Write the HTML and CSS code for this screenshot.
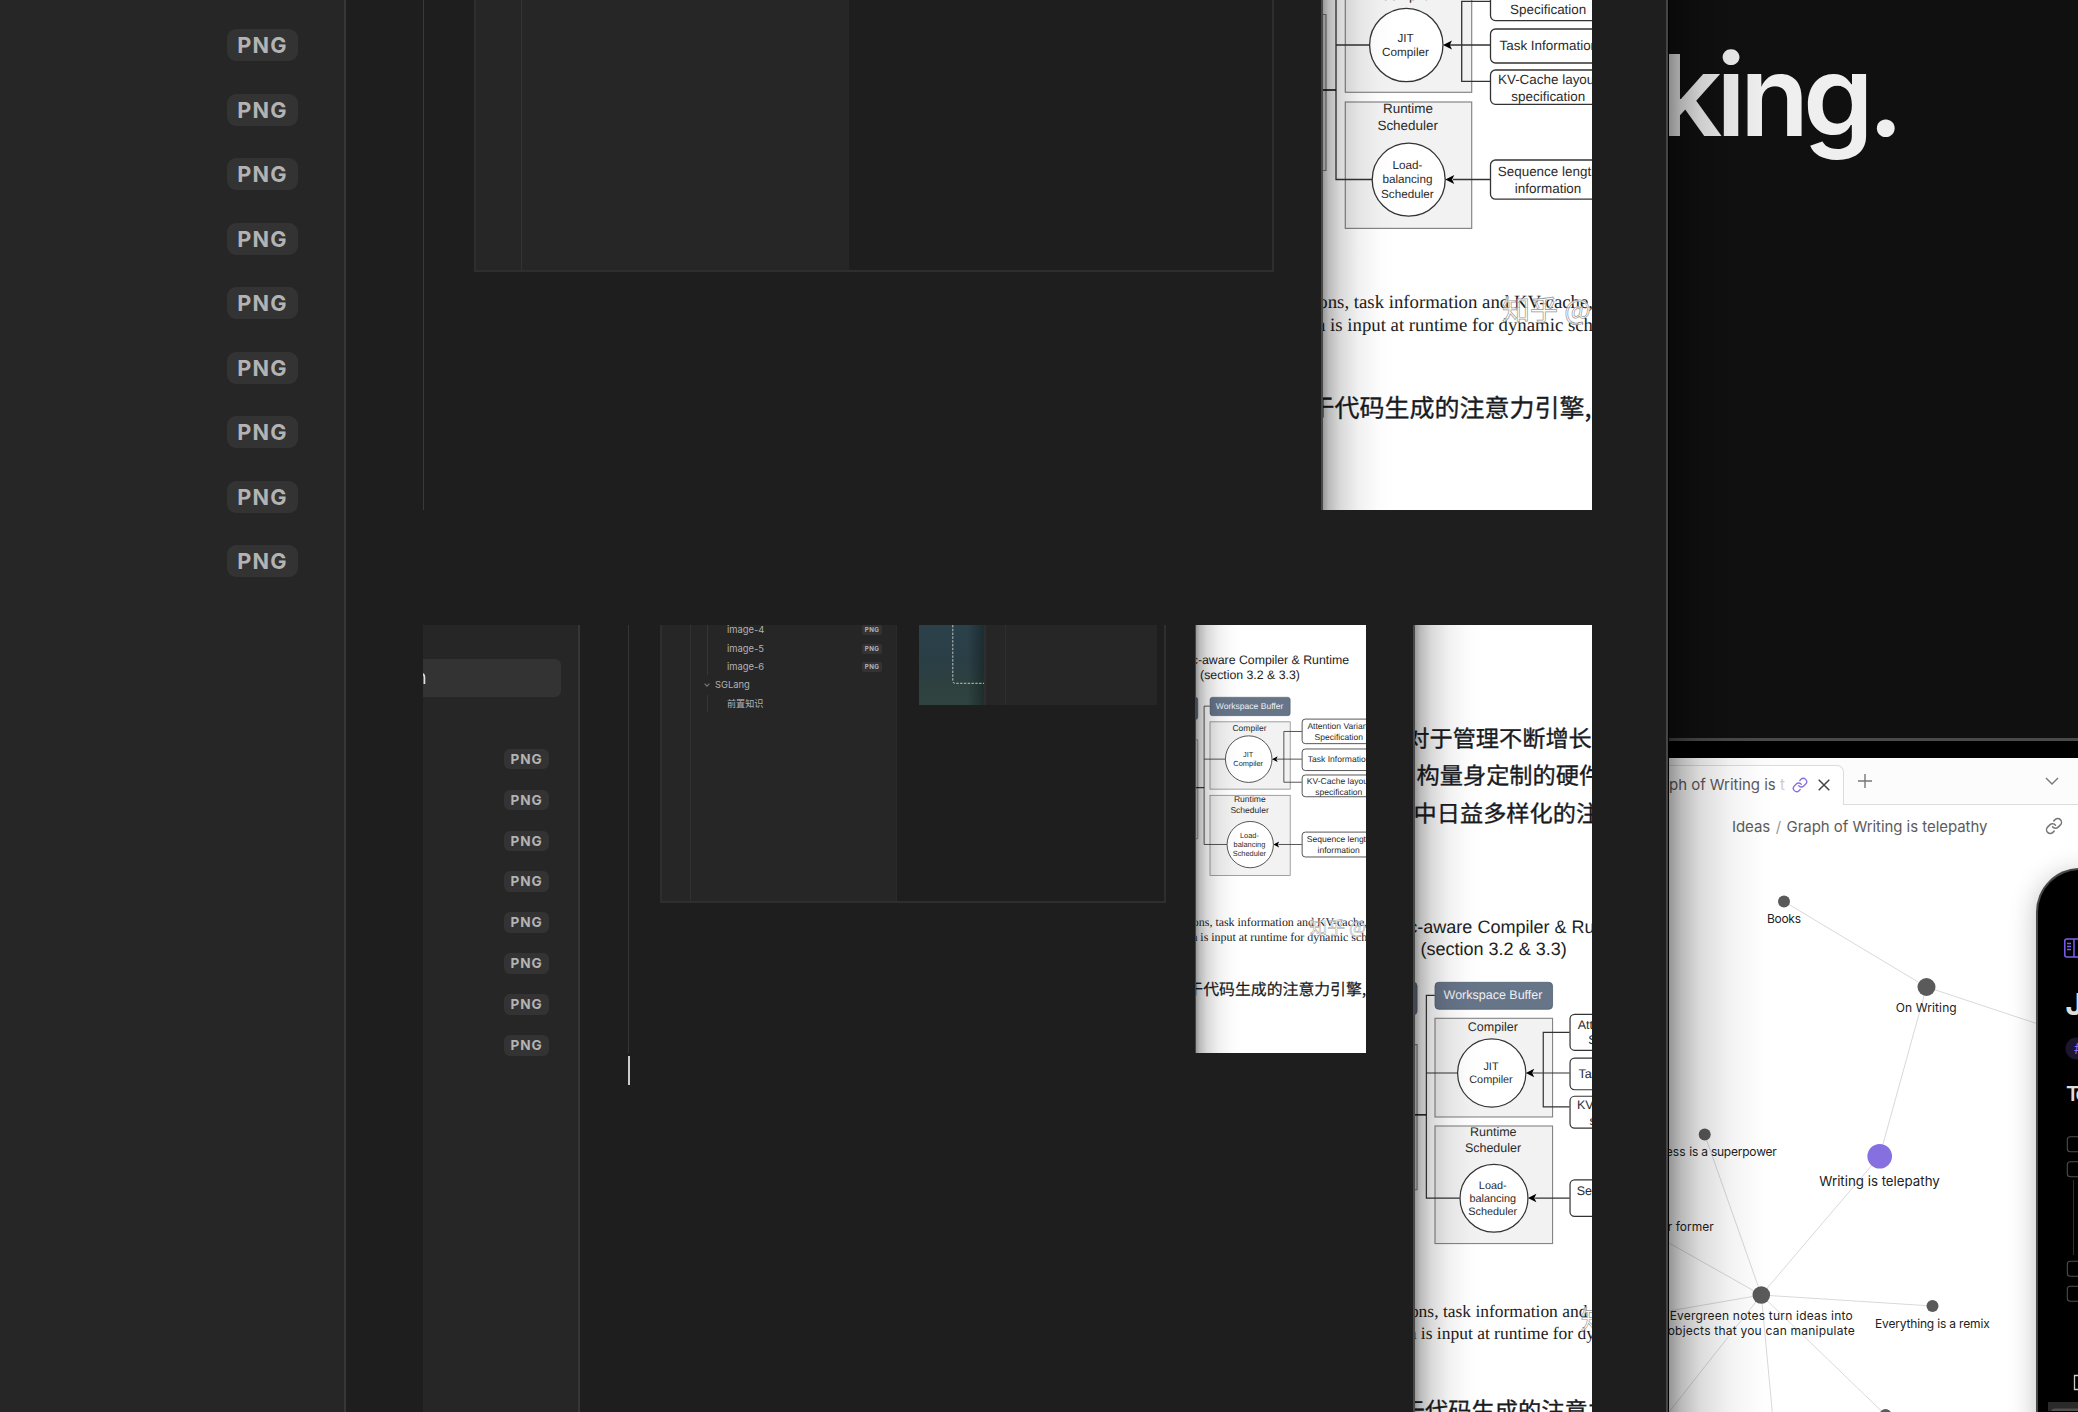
FILE: index.html
```html
<!DOCTYPE html>
<html lang="en">
<head>
<meta charset="utf-8">
<title>Notes</title>
<link rel="stylesheet" href="styles.css">
</head>
<body>
<div class="app">
  <aside class="files">
    <span class="tag">PNG</span><span class="tag">PNG</span><span class="tag">PNG</span>
    <span class="tag">PNG</span><span class="tag">PNG</span><span class="tag">PNG</span>
    <span class="tag">PNG</span><span class="tag">PNG</span><span class="tag">PNG</span>
  </aside>

  <main class="editor">
    <section class="shot shot-top">
      <div class="mini mini-large">
        <div class="ribbon"></div>
        <div class="tree"></div>
      </div>
      <div class="paper paper-a">
        <svg width="269" height="510" viewBox="1323 0 269 510">
          <g id="diagram" class="diagram">
            <path class="slate" d="M1310-52.5h12a4 4 0 0 1 4 4v27a4 4 0 0 1-4 4h-12z"/>
            <rect class="slate" x="1345.3" y="-52.5" width="126.4" height="29" rx="4"/>
            <path class="frame" d="M1310 14.5h16v156h-16"/>
            <rect class="frame" x="1345.3" y="-13.8" width="126.4" height="106.1"/>
            <rect class="frame" x="1345.3" y="102" width="126.4" height="126.4"/>
            <path class="wire" d="M1345-38.5h-9v218h36M1336 45h34M1490 1.4h-28.3v80H1490M1450 45h40M1453 179.5h37"/>
            <path class="wire strong" d="M1320 90h16"/>
            <circle class="node" cx="1406.3" cy="45" r="36.7"/>
            <circle class="node" cx="1408.7" cy="179.7" r="36.5"/>
            <path d="M1443 45l9-4.6-2.2 4.6 2.2 4.6zM1445.3 179.5l9-4.6-2.2 4.6 2.2 4.6z"/>
            <rect class="node" x="1490.5" y="-18.1" width="118" height="38.7" rx="5"/>
            <rect class="node" x="1490.5" y="29" width="118" height="34" rx="5"/>
            <rect class="node" x="1490.5" y="70" width="118" height="34.3" rx="5"/>
            <rect class="node" x="1490.5" y="160" width="118" height="39.2" rx="5"/>
          </g>
          <g class="words">
            <text x="1407.5" y="-.5">Compiler</text>
            <text class="sm" x="1405.5" y="41.5">JIT</text><text class="sm" x="1405.5" y="56">Compiler</text>
            <text x="1408" y="113.2">Runtime</text><text x="1407.7" y="129.5">Scheduler</text>
            <text class="sm" x="1407.4" y="169.3">Load-</text><text class="sm" x="1407.4" y="183.3">balancing</text><text class="sm" x="1407.4" y="197.5">Scheduler</text>
            <text x="1548.2" y="14.3">Specification</text>
            <text x="1548.8" y="50">Task Information</text>
            <text x="1548" y="84">KV-Cache layout</text><text x="1548.3" y="101">specification</text>
            <text x="1548.2" y="176.3">Sequence length</text><text x="1548.1" y="193">information</text>
            <g class="serif"><text x="1318.3" y="308.3">ons, task information and KV-cache,</text><text x="1316" y="331.3">n is input at runtime for dynamic sch</text></g>
            <text class="mark" x="1502" y="320">知乎 @</text>
            <text class="han" x="1309.6" y="417">于代码生成的注意力引擎,</text>
          </g>
        </svg>
      </div>
    </section>

    <section class="shot shot-bottom">
      <div class="files files-small">
        <div class="search">n</div>
        <span class="tag">PNG</span><span class="tag">PNG</span><span class="tag">PNG</span><span class="tag">PNG</span>
        <span class="tag">PNG</span><span class="tag">PNG</span><span class="tag">PNG</span><span class="tag">PNG</span>
      </div>
      <div class="note">
        <div class="nested">
          <div class="mini mini-small">
            <div class="ribbon"></div>
            <div class="tree">
              <div class="branch">
                <div class="row"><span>image-4</span><span class="tag">PNG</span></div>
                <div class="row"><span>image-5</span><span class="tag">PNG</span></div>
                <div class="row"><span>image-6</span><span class="tag">PNG</span></div>
              </div>
              <div class="folder"><svg width="6" height="4" viewBox="0 0 6 4"><path d="M.6.6 3 3.2 5.4.6"/></svg><span>SGLang</span></div>
              <div class="branch last"><div class="row"><span>前置知识</span></div></div>
            </div>
            <div class="pane">
              <div class="teal"><svg width="65" height="80" viewBox="0 0 65 80"><path d="M33.8 0v56q0 2.3 2.5 2.3h29"/></svg></div>
              <div class="slot"></div>
              <div class="blank"></div>
            </div>
          </div>
          <div class="paper paper-b">
            <svg width="170" height="428" viewBox="1196 625 170 428">
              <g transform="translate(1210 795.3) scale(.6345) translate(-1345.3 -102)">
                <use href="#diagram"/>
                <g class="words">
                  <g class="title"><text x="1564.4" y="-105.3" text-anchor="end">c-aware Compiler &amp; Runtime</text><text x="1329.6" y="-81">(section 3.2 &amp; 3.3)</text></g>
                  <text class="light" x="1407.7" y="-34">Workspace Buffer</text>
                  <text x="1407.5" y="0">Compiler</text>
                  <text class="sm" x="1405.5" y="41.5">JIT</text><text class="sm" x="1405.5" y="56">Compiler</text>
                  <text x="1408" y="113.2">Runtime</text><text x="1407.7" y="129.5">Scheduler</text>
                  <text class="sm" x="1407.4" y="169.3">Load-</text><text class="sm" x="1407.4" y="183.3">balancing</text><text class="sm" x="1407.4" y="197.5">Scheduler</text>
                  <text x="1548" y="-2">Attention Variant</text><text x="1548.2" y="14.3">Specification</text>
                  <text x="1548.8" y="50">Task Information</text>
                  <text x="1548" y="84">KV-Cache layout</text><text x="1548.3" y="101">specification</text>
                  <text x="1548.2" y="176.3">Sequence length</text><text x="1548.1" y="193">information</text>
                  <g class="serif"><text x="1318.3" y="308.3">ons, task information and KV-cache,</text><text x="1316" y="331.3">n is input at runtime for dynamic sch</text></g>
                  <text class="mark" x="1502" y="320">知乎 @</text>
                  <text class="han" x="1309.6" y="416.3">于代码生成的注意力引擎,</text>
                </g>
              </g>
            </svg>
          </div>
        </div>
        <div class="caret"></div>
      </div>
      <div class="paper paper-c">
        <svg width="177" height="787" viewBox="1415 625 177 787">
          <g class="words"><g class="han body">
            <text x="1406.3" y="746.6">对于管理不断增长</text>
            <text x="1416.6" y="784">构量身定制的硬件</text>
            <text x="1413.6" y="821.5">中日益多样化的注</text>
          </g></g>
          <g transform="translate(1435 1126) scale(.93) translate(-1345.3 -102)">
            <use href="#diagram"/>
            <g class="words">
              <g class="title"><text x="1564.4" y="-105.6" text-anchor="end">c-aware Compiler &amp; Runtime</text><text x="1329.6" y="-81.5">(section 3.2 &amp; 3.3)</text></g>
              <text class="light" x="1407.7" y="-34.2">Workspace Buffer</text>
              <text x="1407.5" y="-.5">Compiler</text>
              <text class="sm" x="1405.5" y="41.5">JIT</text><text class="sm" x="1405.5" y="56">Compiler</text>
              <text x="1408" y="113.2">Runtime</text><text x="1407.7" y="129.5">Scheduler</text>
              <text class="sm" x="1407.4" y="169.3">Load-</text><text class="sm" x="1407.4" y="183.3">balancing</text><text class="sm" x="1407.4" y="197.5">Scheduler</text>
              <text x="1548" y="-2">Attention Variant</text><text x="1548.2" y="14.3">Specification</text>
              <text x="1548.8" y="50">Task Information</text>
              <text x="1548" y="84">KV-Cache layout</text><text x="1548.3" y="101">specification</text>
              <text x="1548.2" y="176.3">Sequence length</text>
              <g class="serif"><text x="1318.3" y="307.8">ons, task information and</text><text x="1316" y="330.8">n is input at runtime for dynamic</text></g>
              <text class="mark" x="1502" y="320">知</text>
              <text class="han" x="1309.6" y="417">于代码生成的注意力</text>
            </g>
          </g>
        </svg>
      </div>
    </section>
  </main>

  <aside class="site">
    <header class="hero"><h1>king.</h1></header>
    <div class="bezel"></div>
    <div class="tabs">
      <div class="tab">
        <span class="tab-name">ph of Writing is <i>t</i></span>
        <svg class="link purple" width="16" height="16" viewBox="0 0 24 24"><path d="M10 13a5 5 0 0 0 7.54.54l3-3a5 5 0 0 0-7.07-7.07l-1.72 1.71M14 11a5 5 0 0 0-7.54-.54l-3 3a5 5 0 0 0 7.07 7.07l1.71-1.71"/></svg>
        <svg class="close" width="12" height="12" viewBox="0 0 12 12"><path d="M.7.7l10.6 10.6M11.3.7.7 11.3"/></svg>
      </div>
      <div class="strip">
        <svg width="14" height="14" viewBox="0 0 14 14"><path d="M7 0v14M0 7h14"/></svg>
        <svg width="14" height="8" viewBox="0 0 14 8"><path d="M1 1l6 6 6-6"/></svg>
      </div>
    </div>
    <div class="crumbs">
      <span>Ideas</span><span class="slash">/</span><span class="leaf">Graph of Writing is telepathy</span>
      <svg class="link" width="18" height="18" viewBox="0 0 24 24"><path d="M10 13a5 5 0 0 0 7.54.54l3-3a5 5 0 0 0-7.07-7.07l-1.72 1.71M14 11a5 5 0 0 0-7.54-.54l-3 3a5 5 0 0 0 7.07 7.07l1.71-1.71"/></svg>
    </div>
    <svg class="graph" width="409" height="564" viewBox="1669 848 409 564">
      <path class="edges" d="M1784 901.5 1926.5 987 2050 1028M1926.5 987 1879.7 1156 1761.3 1295 1704.7 1134.5M1669 1243l92.3 52L1669 1311M1669 1412l92.3-117 11 117M1885.5 1415l-124.2-120 171.2 11"/>
      <g class="dots"><circle cx="1784" cy="901.5" r="6"/><circle cx="1926.5" cy="987" r="9"/><circle cx="1704.7" cy="1134.6" r="6"/><circle cx="1761.3" cy="1295" r="8.8"/><circle cx="1932.5" cy="1306" r="6"/><circle cx="1885.5" cy="1415" r="6"/><circle class="active" cx="1879.7" cy="1156.2" r="12.3"/></g>
      <g class="labels">
        <text x="1767" y="923" textLength="34">Books</text>
        <text x="1895.7" y="1012" textLength="61">On Writing</text>
        <text x="1689.3" y="1156" textLength="87.5">is a superpower</text><text x="1685.5" y="1156" text-anchor="end">ess</text>
        <text x="1713.7" y="1230.5" text-anchor="end">r former</text>
        <text class="big" x="1819.3" y="1186" textLength="120.5">Writing is telepathy</text>
        <text x="1669.7" y="1320" textLength="183">Evergreen notes turn ideas into</text>
        <text x="1667.7" y="1335.2" textLength="187">objects that you can manipulate</text>
        <text x="1875" y="1327.6" textLength="114.7">Everything is a remix</text>
      </g>
    </svg>
    <div class="phone">
      <svg width="40" height="541" viewBox="2038 871 40 541">
        <g class="violet"><rect x="2064.8" y="940" width="24" height="18" rx="2"/><path d="M2074 940v18M2067 944.5h4M2067 947.5h4M2067 950.5h4"/></g>
        <text class="h1" x="2065.5" y="1015.5">J</text>
        <rect class="pill" x="2065.5" y="1038.5" width="50" height="22" rx="11"/>
        <text class="hash" x="2074" y="1055">#</text>
        <text class="h2" x="2066" y="1102.3">To</text>
        <g class="boxes"><rect x="2067.3" y="1137.8" width="15" height="15" rx="3"/><rect x="2067.3" y="1162.8" width="15" height="15" rx="3"/><rect x="2067.3" y="1262.3" width="15" height="15" rx="3"/><rect x="2067.3" y="1287.3" width="15" height="15" rx="3"/><path d="M2073.5 1181v75" opacity=".6"/></g>
        <path class="doc" d="M2080 1376.5h-5.5v14h5.5"/>
        <path class="dock" d="M2048 1403h30v9h-30z"/><path class="key" d="M2051 1412q1-2.4 4-2.4h23v2.4z"/>
      </svg>
    </div>
  </aside>
</div>
</body>
</html>
```
FILE: styles.css
```css
* { box-sizing: border-box; }
body { margin: 0; background: #1e1e1e; font-family: Inter, "Noto Sans CJK SC", sans-serif; }
svg { display: block; }
.app { display: grid; grid-template-columns: 346px 1320px 412px; height: 1412px; overflow: hidden; }

/* file lists */
.files { display: flex; flex-direction: column; align-items: flex-end; gap: 32.55px; padding: 29px 46px 0 0; background: #262626; border-right: 2px solid #363636; }
.tag { display: block; width: 71px; height: 32px; line-height: 32px; border-radius: 9px; background: #333; color: #b3b3b3; font-size: 21.7px; font-weight: 650; letter-spacing: 1.2px; text-align: center; }

/* editor */
.editor { display: flex; flex-direction: column; gap: 115px; padding-left: 77px; }
.shot { display: flex; width: 1169px; }
.shot-top { height: 510px; padding-left: 50px; border-left: 1px solid #3a3a3a; }
.shot-bottom { height: 787px; }
.mini { display: flex; border: solid #2e2e2e; border-width: 0 2px 2px; }
.mini .ribbon, .mini .tree { flex: none; background: #262626; }
.mini-large { width: 800px; height: 272px; }
.mini-large .ribbon { width: 46px; border-right: 1px solid #333; }
.mini-large .tree { width: 327px; }
.paper { position: relative; overflow: hidden; background: #fff; border-left: 2px solid #484848; }
.paper::after { content: ""; position: absolute; inset: 0; background: linear-gradient(90deg, rgba(0,0,0,.4), rgba(0,0,0,.27) 8%, rgba(0,0,0,.15) 24%, rgba(0,0,0,.055) 50%, rgba(0,0,0,.012) 78%, transparent); background-size: 72px 100%; background-repeat: no-repeat; }
.paper-a { width: 271px; margin-left: auto; }
.paper-b { flex: none; width: 171px; height: 428px; margin-left: auto; border-left-width: 1px; }
.paper-b::after { background-size: 46px 100%; }
.paper-c { width: 179px; margin-left: auto; }
.paper-c::after { background-size: 68px 100%; }

.files-small { width: 157px; gap: 20.3px; padding: 34px 29px 0 0; }
.files-small .tag { width: 45px; height: 20.6px; line-height: 20.6px; border-radius: 6px; font-size: 13.6px; letter-spacing: .8px; }
.search { width: 138px; height: 38px; margin: 0 -12px 31.5px 0; border-radius: 0 6px 6px 0; background: #333; color: #ddd; font-size: 19px; line-height: 38px; text-indent: -7.5px; overflow: hidden; will-change: transform; }
.note { flex: none; width: 738px; margin-left: 48px; }
.nested { display: flex; height: 428px; padding-left: 31px; border-left: 1px solid #363636; }
.caret { width: 2px; height: 29px; margin-top: 3px; background: #ccc; }
.mini-small { flex: none; width: 506px; height: 278px; overflow: hidden; }
.mini-small .ribbon { width: 29px; border-right: 1px solid #313131; }
.mini-small .tree { width: 206px; padding: 0 14px 0 16px; color: #b3b3b3; font-size: 9.4px; border-right: 1px solid #2a2a2a; }
.branch { height: 50px; border-left: 1px solid #363636; padding-left: 19px; display: flex; flex-direction: column; }
.branch.last { height: 17px; margin-top: 2px; font-size: 9.1px; }
.branch .row:first-child { margin-top: -4px; }
.branch.last .row:first-child { margin-top: 0; }
.row { display: flex; flex: none; justify-content: space-between; align-items: center; height: 18.5px; line-height: 18px; }
.row .tag { width: 20px; height: 10px; line-height: 10px; border-radius: 2px; font-size: 6.2px; letter-spacing: .35px; }
.folder { display: flex; align-items: center; gap: 5px; height: 18px; margin-left: -3px; padding-top: 1px; }
.folder path { fill: none; stroke: #777; stroke-width: 1.1; }
.pane { display: flex; flex: 1; height: 80px; padding-left: 22px; }
.teal { width: 65px; background: linear-gradient(90deg, transparent 75%, rgba(10,20,20,.45)), linear-gradient(#2b414a, #2a3e46 45%, #2e413f 75%, #2f433f); }
.teal path { fill: none; stroke: #bcc4c4; stroke-width: 1; stroke-dasharray: 2.4 1.4; }
.slot { width: 22px; background: #262626; border: solid #2e2e2e; border-width: 0 1px 0 2px; }
.blank { width: 151px; background: #262626; }

/* figure artwork */
.slate { fill: #677589; stroke: #4d5a6d; stroke-width: .8; }
.frame { fill: #f2f2f2; stroke: #858585; stroke-width: 1.2; }
.wire { fill: none; stroke: #333; stroke-width: 1.3; }
.strong { stroke: #111; stroke-width: 1.6; }
.node { fill: #fff; stroke: #333; stroke-width: 1.3; }
.words { fill: #2b2b2b; font: 13.45px "Liberation Sans", Arial, sans-serif; text-anchor: middle; text-rendering: geometricPrecision; }
.words .sm { font-size: 11.7px; }
.words .light { fill: #eef1f5; }
.title { font-size: 19.4px; text-anchor: start; fill: #222; }
.serif { font: 18.8px "Liberation Serif", "Times New Roman", serif; text-anchor: start; fill: #222; }
.han { font: 25px "Noto Sans CJK SC", sans-serif; text-anchor: start; fill: #191b1f; stroke: #191b1f; stroke-width: .35; }
.han.body { font-size: 23.2px; }
.mark { font: 28px "Noto Sans CJK SC", sans-serif; text-anchor: start; fill: #fff; fill-opacity: .75; stroke: #999; stroke-width: .7; }

/* website window */
.site { position: relative; display: flex; flex-direction: column; overflow: hidden; background: #fff; border-left: 2px solid #464646; box-shadow: inset 1px 0 #000; padding-left: 1px; }
.site::after { content: ""; position: absolute; top: 0; bottom: 0; left: 1px; width: 104px; background: linear-gradient(90deg, rgba(0,0,0,.42), rgba(0,0,0,.27) 12%, rgba(0,0,0,.14) 30%, rgba(0,0,0,.05) 58%, rgba(0,0,0,.012) 85%, transparent); }
/* faces the hero text as well as the page below it */
.site::after { z-index: 1; }
.hero { height: 738px; background: #101010; overflow: hidden; }
h1 { margin: 0; padding-top: 26px; text-indent: -11px; color: #efefef; font-size: 113px; line-height: 139px; font-weight: 640; letter-spacing: -6px; }
.bezel { height: 20px; background: #000; border-top: 3px solid #4a4a4a; }
.tabs { display: flex; height: 47px; background: #fcfcfc; color: #5c5c5c; }
.tab { display: flex; align-items: center; width: 175px; margin-top: 7px; padding-bottom: 2px; border: solid #dcdcdc; border-width: 1px 1px 0 0; border-radius: 0 7px 0 0; background: #fff; font-size: 15px; white-space: nowrap; }
.tab-name { width: 123px; padding-bottom: 1px; letter-spacing: -.03px; }
.tab-name i { font-style: normal; color: #ccc; }
.link { fill: none; stroke: #777; stroke-width: 2; stroke-linecap: round; }
.link.purple { stroke: #866fdf; }
.close { margin-left: 10px; fill: none; stroke: #444; stroke-width: 1.5; }
.strip { display: flex; flex: 1; justify-content: space-between; align-items: center; padding: 0 19px 0 14px; border-bottom: 1px solid #dcdcdc; }
.strip path { fill: none; stroke: #777; stroke-width: 1.4; }
.crumbs { display: flex; align-items: center; height: 43px; padding: 0 15px 1px 63px; color: #5c5c5c; font-size: 15px; letter-spacing: -.05px; white-space: nowrap; }
.slash { padding: 0 5.5px; color: #999; }
.crumbs .link { margin-left: auto; }
.edges { fill: none; stroke: #d9d9d9; stroke-width: 1; }
.dots { fill: #5a5a5a; }
.dots .active { fill: #866fdf; }
.labels { fill: #222; font-size: 12px; }
.labels .big { font-size: 13.3px; }
.phone { position: absolute; left: 368px; top: 868px; width: 120px; height: 600px; background: #000; border: solid #484848; border-width: 2.5px 0 0 2px; border-radius: 44px 0 0 0; box-shadow: -2px 4px 26px rgba(0,0,0,.22); }
.violet { fill: none; stroke: #7b5ff0; stroke-width: 1.5; }
.phone .h1 { fill: #ddd; font-size: 30px; font-weight: 700; }
.phone .h2 { fill: #ddd; font-size: 20.5px; font-weight: 600; letter-spacing: -2.4px; }
.pill { fill: #1c1530; }
.hash { fill: #8b6cef; font-size: 14px; }
.boxes { fill: none; stroke: #4d4d4d; stroke-width: 1.1; }
.doc { fill: none; stroke: #ccc; stroke-width: 1.3; }
.dock { fill: #2a2a2a; }
.key { fill: #505050; }
```
